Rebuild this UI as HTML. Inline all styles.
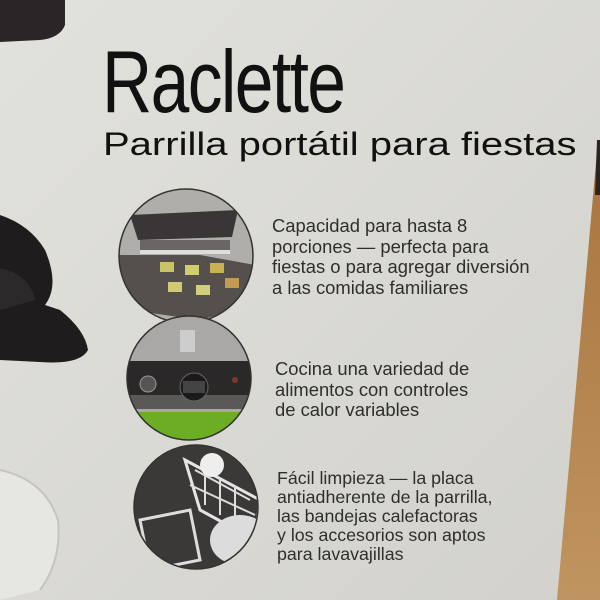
<!DOCTYPE html>
<html><head><meta charset="utf-8"><style>
html,body{margin:0;padding:0}
body{width:600px;height:600px;position:relative;overflow:hidden;background:#d9d8d2;font-family:"Liberation Sans",sans-serif;color:#1a1a1a}
.t{position:absolute;white-space:nowrap;line-height:1;transform-origin:0 0}
.p{position:absolute;font-size:18.4px;color:#2e2e2e;white-space:nowrap;line-height:1}
.p div{height:20.7px}
</style></head><body>
<svg width="600" height="600" style="position:absolute;left:0;top:0">
<defs>
<linearGradient id="bg" x1="0" y1="0" x2="1" y2="1"><stop offset="0" stop-color="#e2e2dc"/><stop offset="1" stop-color="#d2d1cb"/></linearGradient>
<linearGradient id="wood" x1="0" y1="0" x2="0" y2="1"><stop offset="0" stop-color="#a8743d"/><stop offset="1" stop-color="#c09460"/></linearGradient>
<clipPath id="c1"><circle cx="186" cy="256" r="67"/></clipPath>
<clipPath id="c2"><circle cx="189" cy="378" r="62"/></clipPath>
<clipPath id="c3"><circle cx="196" cy="507" r="62"/></clipPath>
</defs>
<rect width="600" height="600" fill="url(#bg)"/>
<polygon points="598,140 600,140 600,600 557,600" fill="url(#wood)"/>
<polygon points="597,140 600,140 600,195 595,195" fill="#2a2520"/>
<path d="M0,0 H65 V25 Q60,38 40,40 L0,42 Z" fill="#2a2628"/>
<path d="M0,215 Q30,225 45,250 Q60,285 45,305 L60,310 Q85,330 88,350 Q80,365 40,362 L0,360 Z" fill="#1e1c1d"/>
<path d="M0,268 Q30,275 35,300 L0,310 Z" fill="#2c292a"/>
<path d="M0,470 Q45,480 58,520 Q62,560 40,590 L0,600 Z" fill="#e6e6e3"/>
<path d="M0,470 Q45,480 58,520 Q62,560 40,590" fill="none" stroke="#c4c4c0" stroke-width="2"/>
<g clip-path="url(#c1)">
<rect x="110" y="180" width="160" height="150" fill="#b0aeab"/>
<polygon points="130,215 238,210 232,237 138,240" fill="#3a3536"/>
<rect x="140" y="240" width="90" height="12" fill="#6a6665"/>
<rect x="140" y="250" width="90" height="4" fill="#ddd"/>
<polygon points="115,255 200,255 255,265 255,305 200,320 130,310" fill="#56504c"/>
<rect x="160" y="262" width="14" height="10" fill="#c9c46a"/><rect x="185" y="265" width="14" height="10" fill="#d2cd70"/>
<rect x="210" y="263" width="14" height="10" fill="#c8b350"/><rect x="168" y="282" width="14" height="10" fill="#d0cb70"/>
<rect x="196" y="285" width="14" height="10" fill="#d2cf7a"/><rect x="225" y="278" width="14" height="10" fill="#c39a50"/>
</g>
<circle cx="186" cy="256" r="67" fill="none" stroke="#333" stroke-width="1.5"/>
<g clip-path="url(#c2)">
<rect x="120" y="310" width="140" height="140" fill="#a9a8a6"/>
<rect x="180" y="330" width="15" height="22" fill="#ccc"/>
<rect x="120" y="361" width="140" height="34" fill="#2a2829"/>
<rect x="120" y="395" width="140" height="14" fill="#5b5958"/>
<rect x="120" y="412" width="140" height="40" fill="#6cad24"/>
<circle cx="148" cy="384" r="8" fill="#555" stroke="#999"/>
<circle cx="194" cy="387" r="14" fill="#1a1a1a" stroke="#666"/>
<rect x="183" y="381" width="22" height="12" fill="#444"/>
<circle cx="235" cy="380" r="3" fill="#7a3a2a"/>
</g>
<circle cx="189" cy="378" r="62" fill="none" stroke="#333" stroke-width="1.5"/>
<g clip-path="url(#c3)">
<rect x="130" y="440" width="140" height="140" fill="#3b3838"/>
<path d="M185,460 L260,500 L255,540 L200,510 Z" fill="none" stroke="#e5e5e5" stroke-width="3"/>
<path d="M195,470 L250,500 M190,485 L255,515 M205,470 V505 M220,478 V515 M235,486 V520" stroke="#ddd" stroke-width="2"/>
<ellipse cx="240" cy="540" rx="30" ry="25" fill="#dcdcdc"/>
<path d="M140,520 L190,510 L200,560 L150,570 Z" fill="none" stroke="#ddd" stroke-width="3"/>
<circle cx="212" cy="465" r="12" fill="#eee"/>
</g>
<circle cx="196" cy="507" r="62" fill="none" stroke="#333" stroke-width="1.5"/>
</svg>
<div class="t" style="left:102px;top:38px;font-size:88px;letter-spacing:-2px;color:#111;transform:scaleX(0.79)">Raclette</div>
<div class="t" style="left:103px;top:128px;font-size:32px;color:#111;transform:scaleX(1.25)">Parrilla portátil para fiestas</div>
<div class="p" style="left:272px;top:217px"><div>Capacidad para hasta 8</div><div>porciones — perfecta para</div><div>fiestas o para agregar diversión</div><div>a las comidas familiares</div></div>
<div class="p" style="left:275px;top:360px"><div>Cocina una variedad de</div><div>alimentos con controles</div><div>de calor variables</div></div>
<div class="p" style="left:277px;top:470px;font-size:17.8px"><div style="height:19px">Fácil limpieza — la placa</div><div style="height:19px">antiadherente de la parrilla,</div><div style="height:19px">las bandejas calefactoras</div><div style="height:19px">y los accesorios son aptos</div><div style="height:19px">para lavavajillas</div></div>
</body></html>
